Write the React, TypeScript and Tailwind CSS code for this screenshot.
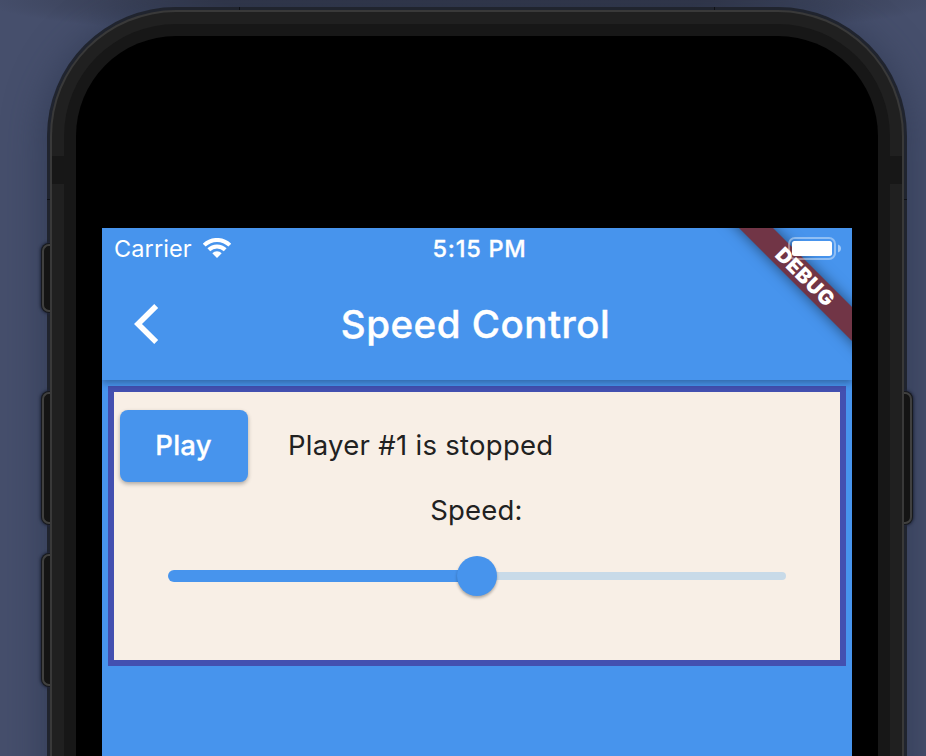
import React from "react";

function SideButton({ side, className }: { side: "left" | "right"; className: string }) {
  return (
    <div
      className={`absolute box-border w-[10px] border-2 border-[#40403f] bg-[#141414] shadow-[0_0_0_1px_#17191d,0_0_3px_2px_#20263a] ${
        side === "left" ? "left-[-5px] rounded-l-[7px] border-r-0" : "right-[-5px] rounded-r-[7px] border-l-0"
      } ${className}`}
    />
  );
}

function StatusBar() {
  return (
    <div className="flex h-10 items-center text-white">
      <div className="flex w-[250px] items-center pl-[12px]">
        <span className="w-[89px] whitespace-nowrap pt-[2px] text-[23.5px] font-normal leading-10 tracking-[0.1px]">Carrier</span>
        <svg width="28" height="20" viewBox="0 0 28 20" className="block">
          <g fill="none" stroke="white" strokeWidth="4">
            <path d="M1.2 7.2A18.2 18.2 0 0 1 26.8 7.2" />
            <path d="M5.8 11.8A11.7 11.7 0 0 1 22.2 11.8" />
          </g>
          <path d="M14 20L9.3 15.3A6.6 6.6 0 0 1 18.7 15.3Z" fill="white" />
        </svg>
      </div>
      <div className="w-[255px] whitespace-nowrap pt-[2px] text-center text-[23.5px] font-medium leading-10 tracking-[0.75px] [-webkit-text-stroke:0.3px_white]">5:15 PM</div>
    </div>
  );
}

function DebugBanner() {
  return (
    <div className="absolute right-0 top-0 h-[152px] w-[180px] overflow-hidden">
      <div className="absolute left-[32px] top-[36px] flex h-6 w-[200px] rotate-45 items-center justify-center bg-[#713546] pl-[3px] text-[20.5px] font-black leading-6 tracking-[0.5px] text-white shadow-[0_0_14px_rgba(0,0,0,0.5)]">
        DEBUG
      </div>
      <svg className="absolute left-[116px] top-[8px]" width="56" height="26" viewBox="0 0 56 26">
        <rect x="1" y="2" width="46" height="21" rx="6" fill="none" stroke="white" strokeOpacity="0.4" strokeWidth="2" />
        <rect x="4" y="5" width="40" height="15" rx="2.5" fill="white" />
        <path d="M50 8.5C52 9.2 53 10.6 53 12.5S52 15.8 50 16.5Z" fill="white" fillOpacity="0.5" />
      </svg>
    </div>
  );
}

function PlayerCard() {
  return (
    <div className="h-[280px] border-[6px] border-[#4350b0] bg-[#f8efe6] px-[6px] pt-[18px] text-[#212121]">
      <div className="flex h-[72px] items-center gap-10">
        <button className="flex h-[72px] w-32 items-center justify-center rounded-[8px] bg-[#4794ed] pr-px text-[27.5px] font-medium tracking-[0.2px] text-white shadow-[0_2px_4px_rgba(0,0,0,0.3)] [-webkit-text-stroke:0.3px_white]">
          Play
        </button>
        <span className="whitespace-nowrap text-[27.5px] font-normal tracking-[0.28px]">Player #1 is stopped</span>
      </div>
      <div className="mt-2 pr-px text-center text-[27.5px] font-normal leading-10 tracking-[0.2px]">Speed:</div>
      <div className="mx-12 mt-[26px] flex h-10 items-center">
        <div className="h-3 w-[290px] rounded-l-full bg-[#4794ed]" />
        <div className="z-10 -ml-px size-10 shrink-0 rounded-full bg-[#4794ed] shadow-[0_2px_3px_rgba(0,0,0,0.3)]" />
        <div className="-ml-px h-2 flex-1 rounded-r-full bg-[#c8dae8]" />
      </div>
    </div>
  );
}

function AppScreen() {
  return (
    <div className="relative h-full w-[750px] bg-[#4794ed]">
      <header className="relative h-[152px] bg-[#4794ed] shadow-[0_3px_7px_rgba(0,0,0,0.3)]">
        <StatusBar />
        <div className="flex h-28 items-center">
          <div className="w-24 pl-8">
            <svg width="25" height="40" viewBox="0 0 25 40" className="block">
              <path d="M22.2 2L4 20L22.2 38" fill="none" stroke="white" strokeWidth="5.6" />
            </svg>
          </div>
          <h1 className="w-[556px] whitespace-nowrap pb-px pr-px text-center text-[38.5px] font-medium leading-[48px] tracking-[0.5px] text-white [-webkit-text-stroke:0.4px_white]">
            Speed Control
          </h1>
        </div>
      </header>
      <main className="px-[6px] pt-[6px]">
        <PlayerCard />
      </main>
      <DebugBanner />
    </div>
  );
}

export default function App() {
  return (
    <div
      className="h-[756px] w-[926px] overflow-hidden bg-[#464f6c] bg-[radial-gradient(ellipse_480px_40px_at_50%_0,rgba(40,44,58,0.7)_50%,transparent)]"
      style={{ fontFamily: 'Inter, "Liberation Sans", sans-serif' }}
    >
      <div className="pl-[47px] pt-[7px]">
        <div className="relative h-[900px] w-[860px] rounded-t-[129px] bg-[#20242e] p-[3px] shadow-[0_8px_36px_6px_rgba(42,52,76,0.6)]">
          <SideButton side="left" className="top-[237px] h-[68px]" />
          <SideButton side="left" className="top-[385px] h-[132px]" />
          <SideButton side="left" className="top-[547px] h-[132px]" />
          <SideButton side="right" className="top-[385px] h-[132px]" />
          <div className="absolute left-[192px] top-0 h-[3px] w-px bg-[#0f1116]" />
          <div className="absolute left-[667px] top-0 h-[3px] w-px bg-[#0f1116]" />
          <div className="absolute left-0 top-[192px] h-px w-[3px] bg-[#0f1116]" />
          <div className="absolute right-0 top-[192px] h-px w-[3px] bg-[#0f1116]" />
          <div className="relative h-full rounded-t-[126px] bg-[#393939] p-[2px]">
            <div className="h-full rounded-t-[124px] bg-[linear-gradient(#202020_144px,#171717_144px,#171717_172px,#202020_172px)] p-3">
              <div className="h-full rounded-t-[112px] bg-[#171717] p-3">
                <div className="h-full rounded-t-[100px] bg-black px-[26px] pt-[192px]">
                  <AppScreen />
                </div>
              </div>
            </div>
          </div>
        </div>
      </div>
    </div>
  );
}
